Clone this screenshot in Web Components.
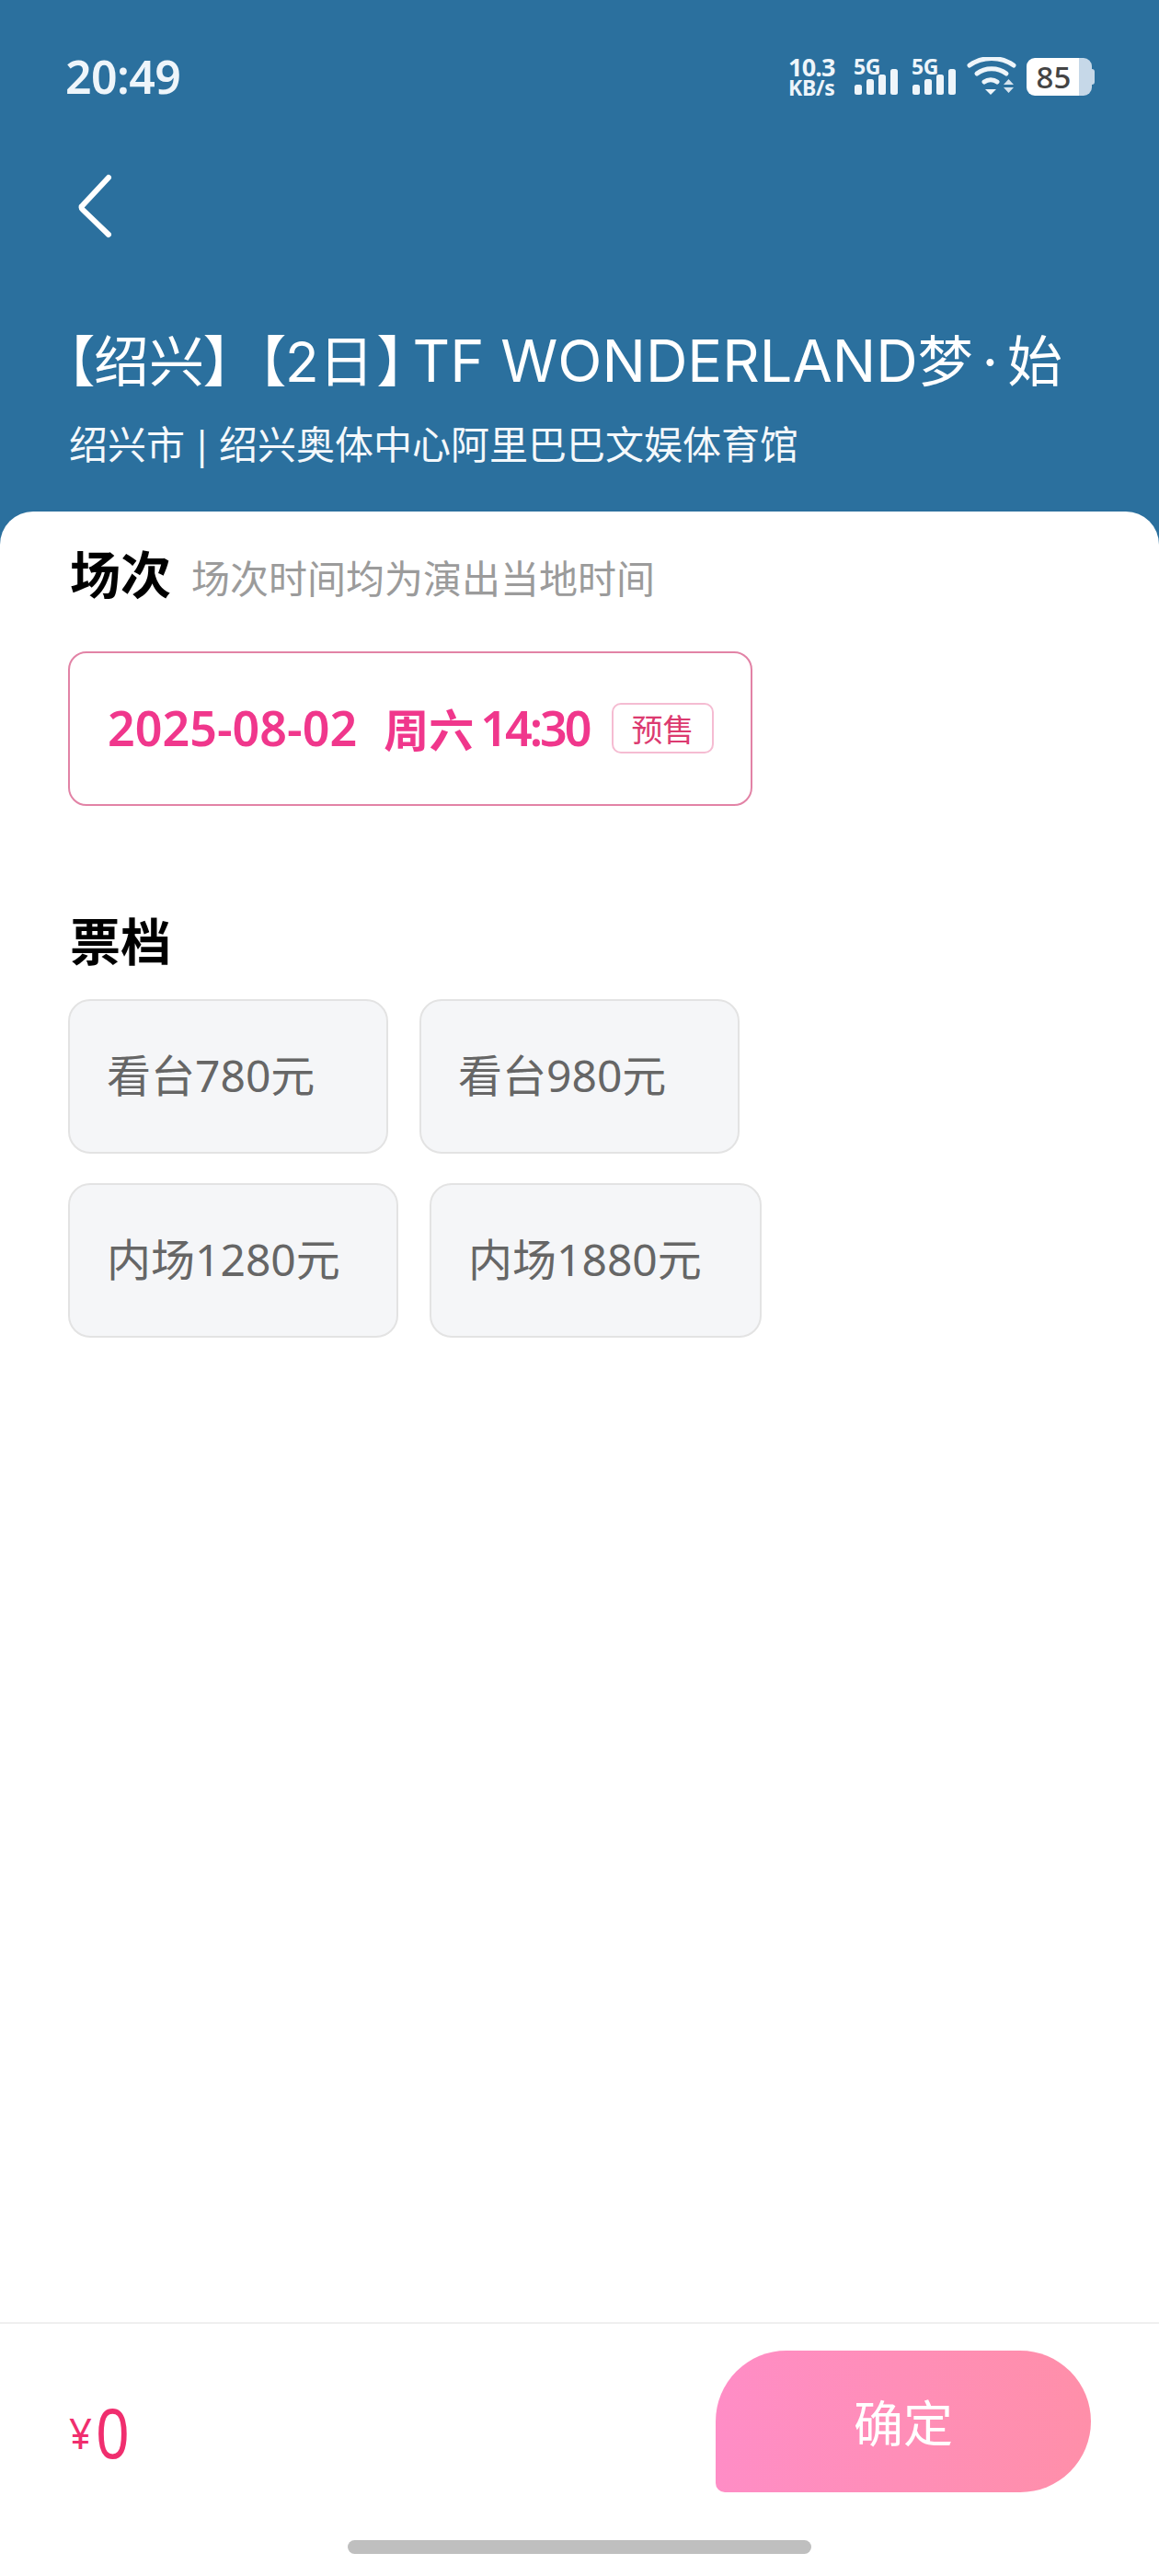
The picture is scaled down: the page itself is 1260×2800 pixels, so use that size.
<!DOCTYPE html>
<html lang="zh"><head><meta charset="utf-8"><title>票档</title>
<style>
html,body{margin:0;padding:0;background:#fff}
body{font-family:"Noto Sans","Noto Sans CJK SC",sans-serif}
</style></head><body>
<app-screen>
  <show-header slot="header" place="绍兴市 | 绍兴奥体中心阿里巴巴文娱体育馆"></show-header>
  <section-block heading="场次" note="场次时间均为演出当地时间" style="--gap:48px;--after:105px">
    <session-card date="2025-08-02" day="周六" time="14:30" tag="预售"></session-card>
  </section-block>
  <section-block heading="票档" style="--gap:27px;--after:0px">
    <ticket-grid>
      <ticket-chip style="--w:348px">看台780元</ticket-chip><ticket-chip style="--w:348px">看台980元</ticket-chip>
      <ticket-chip style="--w:359px">内场1280元</ticket-chip><ticket-chip style="--w:361px">内场1880元</ticket-chip>
    </ticket-grid>
  </section-block>
  <bottom-bar slot="footer" price="0" action="确定"></bottom-bar>
</app-screen>
<script>
function def(name,html,extra){
  const t=document.createElement('template');t.innerHTML=html;
  customElements.define(name,class extends HTMLElement{
    connectedCallback(){
      if(this.shadowRoot)return;
      const r=this.attachShadow({mode:'open'});r.appendChild(t.content.cloneNode(true));
      r.querySelectorAll('[data-a]').forEach(n=>{n.textContent=this.getAttribute(n.dataset.a)||''});
      if(extra)extra(this,r);
    }
  });
}
def('app-screen',`<style>
:host{display:flex;flex-direction:column;width:1260px;height:2800px;background:#fff;overflow:hidden}
.body{flex:1;position:relative;background:#fff;border-radius:36px 36px 0 0;margin-top:-44px;padding:26px 74px 0;min-height:0}
</style><slot name="header"></slot><div class="body"><slot></slot></div><slot name="footer"></slot>`);

def('status-bar',`<style>
:host{display:flex;justify-content:space-between;align-items:center;height:62px;padding:0 70px 0 71px;margin-top:52px;color:#eef5fa}
.time{font:600 50px/62px "Noto Sans",sans-serif;letter-spacing:-.6px}
.right{display:flex;align-items:center;height:42px}
.speed{display:flex;flex-direction:column;font:700 27px/24px "Noto Sans",sans-serif;width:52px;margin-right:20px;letter-spacing:-.8px}
.speed span:last-child{font-size:23px;line-height:20px;letter-spacing:-.3px}
.sig{position:relative;width:48px;height:42px;margin-right:15px}
.sig span{position:absolute;left:-1px;top:-2px;font:700 23px/24px "Noto Sans",sans-serif;letter-spacing:-.3px}
.sig svg{position:absolute;left:0;top:0}
.wifi{margin:0 11px 0 -4px}
.bat{display:flex;width:74px;height:41px}
.bat i{display:block;width:57px;height:41px;background:#fff;border-radius:9px 0 0 9px;text-align:center;font:500 33px/41px "Noto Sans",sans-serif;color:#444;padding-left:2px;box-sizing:border-box}
.bat b{display:block;width:14px;height:41px;background:#c6d8e8;border-radius:0 9px 9px 0}
.bat u{display:block;width:3px;height:17px;margin-top:12px;background:#c6d8e8;border-radius:0 3px 3px 0}
</style>
<div class="time">20:49</div>
<div class="right">
  <div class="speed"><span>10.3</span><span>KB/s</span></div>
  <div class="sig"><span>5G</span><svg width="48" height="42" viewBox="0 0 48 42" fill="#eef5fa"><rect x="0" y="30" width="8" height="11" rx="2.5"/><rect x="13" y="24" width="8" height="17" rx="2.5"/><rect x="26" y="19" width="8" height="22" rx="2.5"/><rect x="39" y="13" width="8" height="28" rx="2.5"/></svg></div>
  <div class="sig"><span>5G</span><svg width="48" height="42" viewBox="0 0 48 42" fill="#eef5fa"><rect x="0" y="30" width="8" height="11" rx="2.5"/><rect x="13" y="24" width="8" height="17" rx="2.5"/><rect x="26" y="19" width="8" height="22" rx="2.5"/><rect x="39" y="13" width="8" height="28" rx="2.5"/></svg></div>
  <svg class="wifi" width="54" height="42" viewBox="0 0 54 42"><g fill="none" stroke="#eef5fa" stroke-width="5" stroke-linecap="round"><path d="M3 9C17 -1 37 -1 51 9"/><path d="M11 18C20 11 34 11 43 18"/><path d="M19 27C23 24 29 24 33 27"/></g><path d="M20 35H32L26 41Z" fill="#eef5fa"/><path d="M40 30L45.500 24L51 30Z M40 33H51L45.500 39Z" fill="#d5e3ee"/></svg>
  <div class="bat"><i>85</i><b></b><u></u></div>
</div>`);

def('show-header',`<style>
:host{display:block;height:600px;background:#2b709e;color:#fff;overflow:hidden}
.back{display:block;margin:75px 0 0 82px;width:42px;height:70px}
h1{margin:90px 0 0 0;padding-left:72px;font:400 60px/86px Inter,"Noto Sans CJK SC",sans-serif;font-feature-settings:"palt";white-space:nowrap}
h1 .b2{margin-left:28px}
h1 .r{margin-left:4px}
h1 .l{font-size:63px;margin-left:8px}
h1 .dot{margin:0 10px}
p{margin:17px 0 0 75px;font:400 42px/60px "Noto Sans","Noto Sans CJK SC",sans-serif;word-spacing:-4px;color:#f4f8fb;white-space:nowrap}
</style>
<status-bar></status-bar>
<svg class="back" viewBox="0 0 42 70"><path d="M36 5L8 35Q5 37 8 40L36 67" transform="translate(0 -1)" fill="none" stroke="#fff" stroke-width="6" stroke-linecap="round" stroke-linejoin="round"/></svg>
<h1><span>【绍兴】</span><span class="b2">【2日</span><span class="r">】</span><span class="l">TF WONDERLAND</span><span>梦</span><span class="dot">·</span><span>始</span></h1><p data-a="place"></p>`);

def('section-block',`<style>
:host{display:block;margin-bottom:var(--after)}
header{display:flex;align-items:baseline;height:78px;margin-left:2px}
h2{margin:0;font:700 55px/78px "Noto Sans CJK SC",sans-serif;color:#000}
small{margin-left:22px;font:400 42px/78px "Noto Sans CJK SC",sans-serif;color:#9b9b9b}
.c{margin-top:var(--gap)}
</style><header><h2 data-a="heading"></h2><small data-a="note"></small></header><div class="c"><slot></slot></div>`);

def('session-card',`<style>
:host{display:flex;align-items:center;box-sizing:border-box;width:744px;height:168px;border:2px solid #e283a6;border-radius:20px;padding:0 40px 2px 41px;color:#f0378c;white-space:nowrap}
.d{font:600 52px/60px "Noto Sans",sans-serif}
.w{font:600 49px/60px "Noto Sans CJK SC",sans-serif;margin-left:29px}
.t{font:600 52px/60px "Noto Sans",sans-serif;letter-spacing:-3px;flex:1;margin-left:7px}
.g{box-sizing:border-box;width:111px;height:55px;border:2px solid #f5bcd2;border-radius:10px;font:400 34px/51px "Noto Sans CJK SC",sans-serif;color:#dc3a70;text-align:center}
</style><span class="d" data-a="date"></span><span class="w" data-a="day"></span><span class="t" data-a="time"></span><span class="g" data-a="tag"></span>`);

def('ticket-grid',`<style>:host{display:flex;flex-wrap:wrap;gap:32px 34px;width:780px}</style><slot></slot>`);

def('ticket-chip',`<style>
:host{display:flex;align-items:center;box-sizing:border-box;width:var(--w);height:168px;padding:0 0 3px 40px;background:#f5f6f8;border:2px solid #e3e3e3;border-radius:24px;font:400 48px/60px "Noto Sans","Noto Sans CJK SC",sans-serif;color:#666;white-space:nowrap}
</style><slot></slot>`);

def('bottom-bar',`<style>
:host{display:block;position:relative;box-sizing:border-box;height:276px;border-top:2px solid #efefef}
.row{display:flex;justify-content:space-between;align-items:flex-start;padding:29px 74px 0 75px}
.p{display:flex;align-items:center;color:#f02e6e;height:86px;padding-top:46px}
.p span{font:400 46px/86px "Noto Sans",sans-serif;width:29px;display:block;transform:scaleX(.95);transform-origin:0 50%}
.p b{font:400 74px/86px "Noto Sans",sans-serif;display:block;transform:scaleX(.87);transform-origin:0 50%}
.b{width:408px;height:154px;background:linear-gradient(90deg,#ff8dc6,#ff8fa9);color:#fff;border-radius:77px 77px 77px 10px;font:400 54px/154px "Noto Sans CJK SC",sans-serif;text-align:center}
.h{position:absolute;left:378px;top:235px;width:504px;height:15px;background:#bfbfbf;border-radius:8px}
</style><div class="row"><div class="p"><span>¥</span><b data-a="price"></b></div><div class="b" data-a="action"></div></div><div class="h"></div>`);
</script>
</body></html>
